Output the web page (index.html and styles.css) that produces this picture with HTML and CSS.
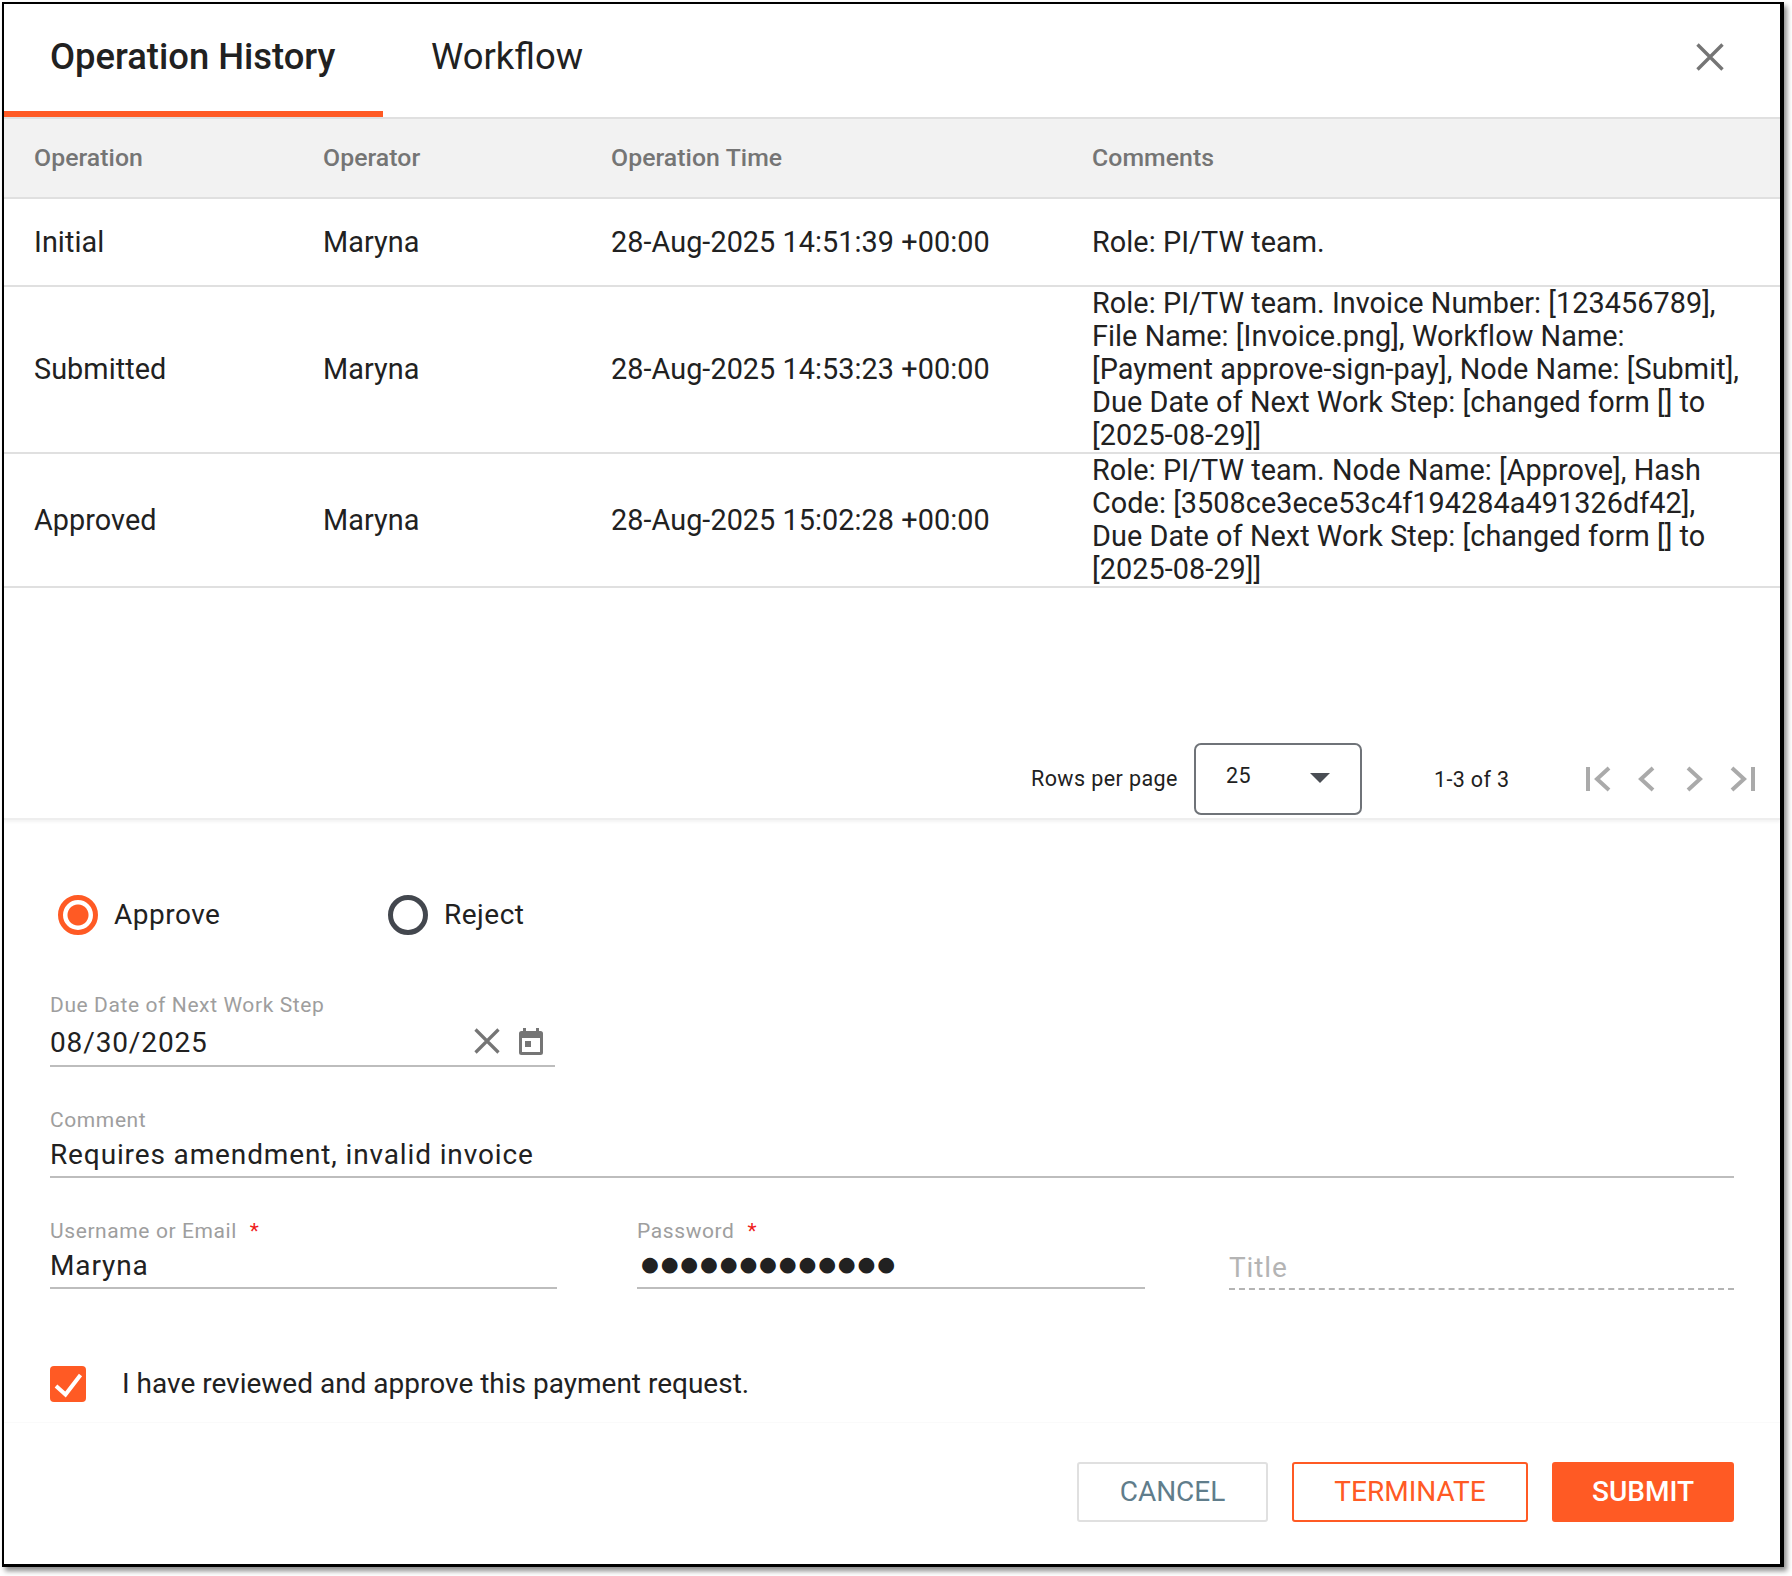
FILE: index.html
```html
<!DOCTYPE html>
<html lang="en">
<head>
<meta charset="utf-8">
<title>Operation History</title>
<link rel="stylesheet" href="styles.css">
</head>
<body>
<div class="window">
  <header class="tabs">
    <div class="tab tab-active">Operation History</div>
    <div class="tab">Workflow</div>
    <button class="close" aria-label="Close">
      <svg viewBox="0 0 28 28" width="28" height="28"><path d="M1.5 1.5 26.5 26.5M26.5 1.5 1.5 26.5" fill="none" stroke="#757575" stroke-width="3.4"/></svg>
    </button>
  </header>

  <section class="history">
    <table class="grid">
      <colgroup><col class="c1"><col class="c2"><col class="c3"><col></colgroup>
      <thead>
        <tr><th>Operation</th><th>Operator</th><th>Operation Time</th><th>Comments</th></tr>
      </thead>
      <tbody>
        <tr class="r1"><td>Initial</td><td>Maryna</td><td>28-Aug-2025 14:51:39 +00:00</td><td>Role: PI/TW team.</td></tr>
        <tr><td>Submitted</td><td>Maryna</td><td>28-Aug-2025 14:53:23 +00:00</td><td>Role: PI/TW team. Invoice Number: [123456789], File Name: [Invoice.png], Workflow Name: [Payment approve-sign-pay], Node Name: [Submit], Due Date of Next Work Step: [changed form [] to [2025-08-29]]</td></tr>
        <tr><td>Approved</td><td>Maryna</td><td>28-Aug-2025 15:02:28 +00:00</td><td>Role: PI/TW team. Node Name: [Approve], Hash Code: [3508ce3ece53c4f194284a491326df42], Due Date of Next Work Step: [changed form [] to [2025-08-29]]</td></tr>
      </tbody>
    </table>
    <div class="pager">
      <span class="pager-label">Rows per page</span>
      <div class="select"><span class="select-value">25</span><span class="caret"></span></div>
      <span class="pager-count">1-3 of 3</span>
      <div class="pager-icons">
        <svg viewBox="0 0 26 26" width="26" height="26"><path d="M2 1V25" stroke="#aaa" stroke-width="4" fill="none"/><path d="M23 2 11 13 23 24" stroke="#aaa" stroke-width="4" fill="none"/></svg>
        <svg viewBox="0 0 26 26" width="26" height="26"><path d="M19 2 7 13 19 24" stroke="#aaa" stroke-width="4" fill="none"/></svg>
        <svg viewBox="0 0 26 26" width="26" height="26"><path d="M7 2 19 13 7 24" stroke="#aaa" stroke-width="4" fill="none"/></svg>
        <svg viewBox="0 0 26 26" width="26" height="26"><path d="M3 2 15 13 3 24" stroke="#aaa" stroke-width="4" fill="none"/><path d="M24 1V25" stroke="#aaa" stroke-width="4" fill="none"/></svg>
      </div>
    </div>
  </section>

  <form class="form">
    <div class="radios">
      <label class="radio radio-approve"><span class="radio-mark on"></span>Approve</label>
      <label class="radio"><span class="radio-mark"></span>Reject</label>
    </div>

    <div class="field field-date">
      <div class="field-label">Due Date of Next Work Step</div>
      <div class="field-value value-tall">
        <span class="date-text">08/30/2025</span>
        <span class="field-icons">
          <svg viewBox="0 0 26 26" width="26" height="26"><path d="M1.5 1.5 24.5 24.5M24.5 1.5 1.5 24.5" fill="none" stroke="#757575" stroke-width="3.2"/></svg>
          <svg viewBox="0 0 24 27" width="24" height="27"><path fill="#757575" d="M4 0h3v3h10V0h3v3h1.500A2.500 2.500 0 0 1 24 5.500V24.500A2.500 2.500 0 0 1 21.500 27H2.500A2.500 2.500 0 0 1 0 24.500V5.500A2.500 2.500 0 0 1 2.500 3H4ZM3 10v14h18V10ZM6 13h6v6H6Z"/></svg>
        </span>
      </div>
    </div>

    <div class="field field-comment">
      <div class="field-label">Comment</div>
      <div class="field-value">Requires amendment, invalid invoice</div>
    </div>

    <div class="cred-row">
      <div class="field">
        <div class="field-label">Username or Email <span class="req">*</span></div>
        <div class="field-value">Maryna</div>
      </div>
      <div class="field">
        <div class="field-label">Password <span class="req">*</span></div>
        <div class="field-value dots">●●●●●●●●●●●●●</div>
      </div>
      <div class="field field-disabled">
        <div class="field-value">Title</div>
      </div>
    </div>

    <label class="check">
      <span class="check-box">
        <svg viewBox="0 0 36 36" width="36" height="36"><path d="M6 20 15.500 28.500 30.500 9" fill="none" stroke="#fff" stroke-width="4"/></svg>
      </span>
      <span class="check-text">I have reviewed and approve this payment request.</span>
    </label>

    <div class="actions">
      <button type="button" class="btn btn-cancel">CANCEL</button>
      <button type="button" class="btn btn-terminate">TERMINATE</button>
      <button type="button" class="btn btn-submit">SUBMIT</button>
    </div>
  </form>
</div>
</body>
</html>
```
FILE: styles.css
```css
* { box-sizing: border-box; }

html, body { margin: 0; padding: 0; background: #fff; }

body {
  padding: 2px 0 0 2px;
  font-family: Roboto, "Liberation Sans", sans-serif;
  color: #212121;
  height: 1576px;
  overflow: hidden;
}

.window {
  width: 1782px;
  height: 1565px;
  border: 2px solid #000;
  border-bottom-width: 3px;
  border-right-width: 4px;
  box-shadow: 3px 4px 5px rgba(0, 0, 0, 0.45);
  background: #fff;
  display: flex;
  flex-direction: column;
}

/* Tabs */
.tabs {
  height: 115px;
  flex: none;
  display: flex;
  align-items: stretch;
  border-bottom: 2px solid #e0e0e0;
  position: relative;
}

.tab {
  font-size: 36.400px;
  line-height: 40px;
  padding: 33px 46px 0 46px;
  height: 113px;
  border-bottom: 6px solid transparent;
}

.tab + .tab { padding-left: 48px; }

.tab-active {
  width: 379px;
  font-weight: 500;
  padding-left: 46px;
  padding-right: 0;
  border-bottom-color: #ff5a24;
}

.close {
  position: absolute;
  right: 56px;
  top: 39px;
  padding: 0;
  border: 0;
  background: none;
  display: flex;
}

/* Table */
.history {
  height: 701px;
  flex: none;
  display: flex;
  flex-direction: column;
  justify-content: space-between;
  border-bottom: 2px solid #eee;
  box-shadow: 0 2px 3px rgba(0, 0, 0, 0.05);
}

.grid {
  width: 100%;
  table-layout: fixed;
  border-collapse: collapse;
  font-size: 28.800px;
  line-height: 33px;
  letter-spacing: 0.06px;
}

.c1 { width: 289px; }
.c2 { width: 288px; }
.c3 { width: 481px; }

.grid th {
  height: 79px;
  padding: 0 0 2px 30px;
  background: #f2f2f2;
  border-bottom: 2px solid #e0e0e0;
  color: #757575;
  font-size: 24.800px;
  font-weight: 500;
  text-align: left;
}

.grid td {
  padding: 0 36px 0 30px;
  border-bottom: 2px solid #e0e0e0;
  vertical-align: middle;
}

.r1 td { height: 88px; }

/* Pager */
.pager {
  display: flex;
  align-items: center;
  height: 72px;
  margin-bottom: 3px;
  padding-left: 1027px;
  font-size: 21.500px;
}

.pager-label { letter-spacing: 0.42px; width: 163px; padding-bottom: 1px; }

.select {
  width: 168px;
  height: 72px;
  border: 2px solid #6f7378;
  border-radius: 7px;
  display: flex;
  align-items: center;
  justify-content: space-between;
  padding: 0 30px 7px 30px;
}

.select-value { font-size: 21.500px; letter-spacing: 0.5px; }

.caret {
  width: 0;
  height: 0;
  margin-top: 4px;
  border-left: 10px solid transparent;
  border-right: 10px solid transparent;
  border-top: 10px solid #4a4e54;
}

.pager-count { margin-left: 72px; width: 152px; letter-spacing: 0.35px; }

.pager-icons {
  display: flex;
  gap: 21.500px;
}

/* Form */
.form {
  flex: 1;
  display: flex;
  flex-direction: column;
  padding: 75px 46px 0 46px;
}

.radios {
  display: flex;
  height: 40px;
  padding-left: 8px;
}

.radio {
  display: flex;
  align-items: center;
  gap: 16px;
  font-size: 28px;
  letter-spacing: 0.5px;
  padding-bottom: 1px;
}

.radio-approve { width: 330px; }

.radio-mark {
  width: 40px;
  height: 40px;
  border: 5px solid #43474e;
  border-radius: 50%;
  flex: none;
}

.radio-mark.on {
  border-color: #ff5a24;
  background: radial-gradient(circle, #ff5a24 0 10px, #fff 11px);
}

.field { display: block; }

.field-label {
  font-size: 21px;
  line-height: 24px;
  color: #9e9e9e;
  letter-spacing: 0.6px;
}

.req { color: #ef1c1c; margin-left: 7px; }

.field-value {
  height: 46px;
  border-bottom: 2px solid #bdbdbd;
  font-size: 28px;
  line-height: 46px;
  letter-spacing: 0.87px;
}

.value-tall {
  height: 50px;
  display: flex;
  justify-content: space-between;
  align-items: center;
}

.date-text { padding-top: 4px; }

.field-date { width: 505px; margin-top: 58px; }

.field-icons {
  display: flex;
  align-items: center;
  gap: 19px;
  padding-right: 12px;
}

.field-comment { margin-top: 41px; }

.cred-row {
  display: grid;
  grid-template-columns: 507px 508px 1fr;
  column-gap: 80px;
  margin-top: 41px;
}

.dots {
  font-family: "DejaVu Sans", sans-serif;
  font-size: 20.500px;
  letter-spacing: 1.800px;
  line-height: 42px;
  padding-left: 4px;
}

.field-disabled {
  padding-top: 25px;
  margin-left: 4px;
}

.field-disabled .field-value {
  color: #b4b4b4;
  border-bottom: 2px dashed #b4b4b4;
  line-height: 48px;
}

.check {
  display: flex;
  align-items: center;
  gap: 36px;
  margin-top: 76px;
  height: 36px;
  font-size: 28px;
}

.check-text { padding-bottom: 1px; }

.check-box {
  width: 36px;
  height: 36px;
  border-radius: 4px;
  background: #ff5a24;
  display: flex;
  flex: none;
}

.actions {
  display: flex;
  justify-content: flex-end;
  gap: 24px;
  margin: 20px -46px 0 -46px;
  padding: 39px 46px 0 46px;
  border-top: 1px solid #fafafa;
}

.btn {
  height: 60px;
  font-family: inherit;
  font-size: 28px;
  border-radius: 3px;
  background: #fff;
  padding: 0 0 2px;
}

.btn-cancel { width: 191px; border: 2px solid #e0e0e0; color: #607d8b; }
.btn-terminate { width: 236px; border: 2px solid #ff5a24; color: #ff5a24; }
.btn-submit { width: 182px; border: 2px solid #ff5a24; background: #ff5a24; color: #fff; font-weight: 500; }
```
